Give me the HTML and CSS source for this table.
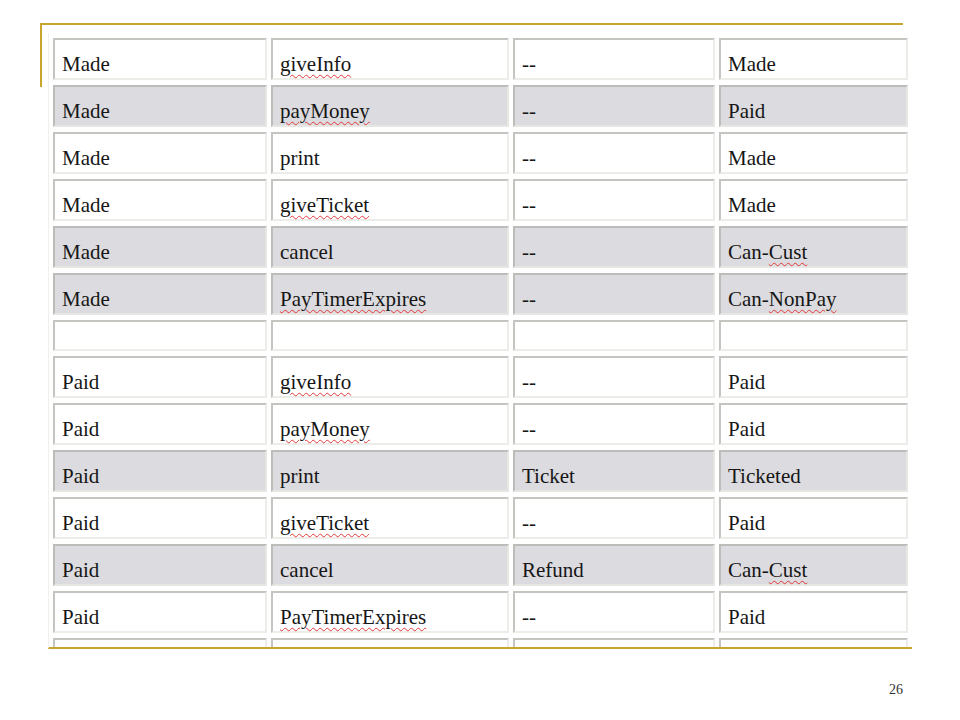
FILE: index.html
```html
<!DOCTYPE html>
<html>
<head>
<meta charset="utf-8">
<link rel="stylesheet" href="styles.css">
</head>
<body>
<div class="slide">
  <div class="frame">
    <div class="clip">
      <table class="grid">
        <colgroup>
          <col class="c1"><col class="c2"><col class="c3"><col class="c4">
        </colgroup>
        <tr><td>Made</td><td><span class="sp">giveInfo</span></td><td>--</td><td>Made</td></tr>
        <tr class="shade"><td>Made</td><td><span class="sp">payMoney</span></td><td>--</td><td>Paid</td></tr>
        <tr><td>Made</td><td>print</td><td>--</td><td>Made</td></tr>
        <tr><td>Made</td><td><span class="sp">giveTicket</span></td><td>--</td><td>Made</td></tr>
        <tr class="shade"><td>Made</td><td>cancel</td><td>--</td><td>Can-<span class="sp">Cust</span></td></tr>
        <tr class="shade"><td>Made</td><td><span class="sp">PayTimerExpires</span></td><td>--</td><td>Can-<span class="sp">NonPay</span></td></tr>
        <tr class="blank"><td></td><td></td><td></td><td></td></tr>
        <tr><td>Paid</td><td><span class="sp">giveInfo</span></td><td>--</td><td>Paid</td></tr>
        <tr><td>Paid</td><td><span class="sp">payMoney</span></td><td>--</td><td>Paid</td></tr>
        <tr class="shade"><td>Paid</td><td>print</td><td>Ticket</td><td>Ticketed</td></tr>
        <tr><td>Paid</td><td><span class="sp">giveTicket</span></td><td>--</td><td>Paid</td></tr>
        <tr class="shade"><td>Paid</td><td>cancel</td><td>Refund</td><td>Can-<span class="sp">Cust</span></td></tr>
        <tr><td>Paid</td><td><span class="sp">PayTimerExpires</span></td><td>--</td><td>Paid</td></tr>
        <tr class="peek"><td></td><td></td><td></td><td></td></tr>
      </table>
    </div>
  </div>
  <div class="pagenum">26</div>
</div>
</body>
</html>
```

FILE: styles.css
```css
html, body {
  margin: 0;
  padding: 0;
  background: #ffffff;
}

.slide {
  width: 960px;
  height: 720px;
  overflow: hidden;
  font-family: "Liberation Serif", "Times New Roman", serif;
}

.frame {
  position: relative;
  margin: 23px 0 0 40px;
  width: 863px;
  border-top: 2px solid #c9a52b;
}

.frame::before {
  content: "";
  position: absolute;
  left: 0;
  top: -2px;
  width: 2px;
  height: 64px;
  background: #c9a52b;
}

.clip {
  margin: 8px 0 0 8px;
  width: 863px;
  height: 614px;
  overflow: hidden;
  border-left: 1px solid #f0f0ec;
  border-bottom: 2px solid #c9a52b;
}

.grid {
  border-collapse: separate;
  border-spacing: 4px 5px;
  table-layout: fixed;
  width: 863px;
  margin: 0;
  font-size: 21px;
  color: #161616;
}

.c1 { width: 214px; }
.c2 { width: 238px; }
.c3 { width: 202px; }
.c4 { width: 189px; }

.grid td {
  box-sizing: border-box;
  height: 42px;
  padding: 11px 7px 0 7px;
  line-height: 27px;
  vertical-align: top;
  white-space: nowrap;
  background: #ffffff;
  border-style: solid;
  border-width: 2px;
  border-color: #c4c4c0 #ecece8 #ecece8 #c4c4c0;
}

.grid .shade td {
  background: #dcdbdf;
  border-color: #bcbcb8 #e6e6e2 #e6e6e2 #bcbcb8;
}

.grid .blank td {
  height: 31px;
  padding: 0;
}

.sp {
  text-decoration: underline wavy #e2393b;
  text-decoration-thickness: 1px;
  text-underline-offset: 3px;
}

.pagenum {
  width: 903px;
  margin-top: 33px;
  text-align: right;
  font-size: 14px;
  line-height: 16px;
  color: #333333;
}
```
